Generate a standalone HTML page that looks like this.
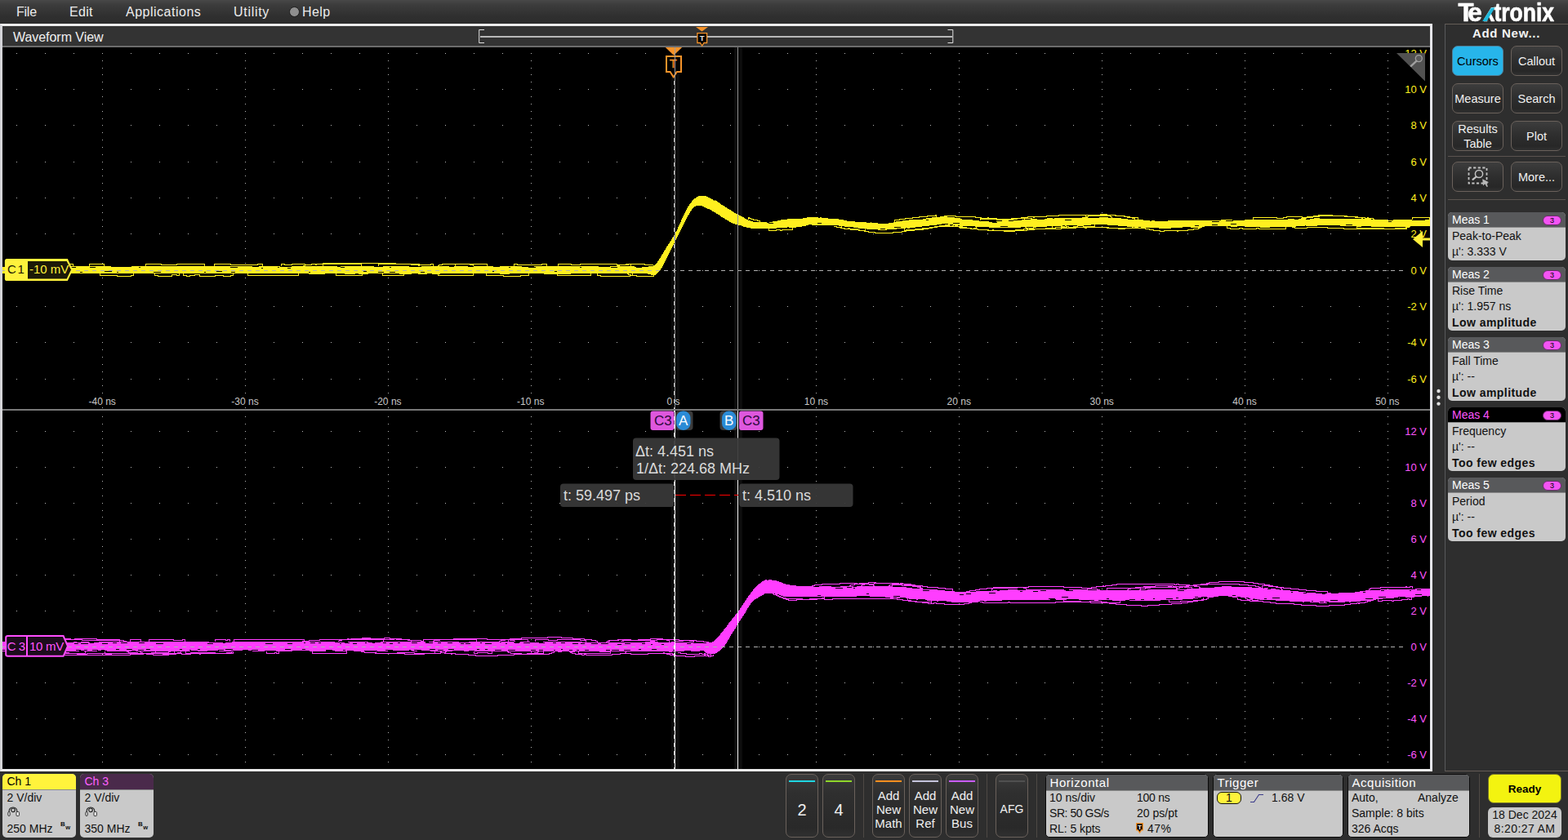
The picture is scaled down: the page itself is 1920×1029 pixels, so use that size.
<!DOCTYPE html>
<html lang="en">
<head>
<meta charset="utf-8">
<title>Waveform View</title>
<style>
*{box-sizing:border-box;margin:0;padding:0}
html,body{width:1920px;height:1029px;overflow:hidden;background:#2e2e2e}
body{position:relative;font-family:"Liberation Sans","DejaVu Sans",sans-serif;color:#e6e6e6;font-size:15px;line-height:1}
.abs{position:absolute}
.t{position:absolute;white-space:nowrap;line-height:1}
#menubar{position:absolute;left:0;top:0;width:1920px;height:29px;background:linear-gradient(#484848 0,#3c3c3c 6px,#2f2f2f 20px,#2c2c2c 100%)}
#menubar .t{top:7px;font-size:16px;color:#ececec}
#wvframe{position:absolute;left:0;top:29px;width:1754px;height:916px;background:#000;border:3px solid #ececec;border-left-color:#d4d4d8;border-right-color:#e6e6ea}
#wvhead{position:absolute;left:3px;top:32px;width:1748px;height:24px;background:#333333}
#wvline{position:absolute;left:3px;top:56px;width:1748px;height:2px;background:#6c6c6c}
#plot{position:absolute;left:0;top:0;width:1920px;height:1029px;pointer-events:none}
.vl{position:absolute;white-space:nowrap;font-size:13px;line-height:14px;height:14px;width:60px;left:1687px;text-align:right}
.vy{color:#ffef1f}.vm{color:#ff55ff}
.tl{position:absolute;white-space:nowrap;font-size:12px;line-height:14px;height:14px;width:80px;text-align:center;color:#c8c8c8;top:485px}
#rpanel{position:absolute;left:1769px;top:29px;width:160px;height:916px;border:1px solid #655d57;border-left-color:#58595b;background:#2e2e2e}
.btn{position:absolute;width:63px;height:37px;border:1px solid #6a615b;border-radius:7px;background:linear-gradient(#3d3d3d 0,#2f2f2f 45%,#272727 85%,#303030 100%);color:#f0f0f0;font-size:14.5px;text-align:center;line-height:36px;white-space:nowrap}
.btn.two{line-height:18px;padding-top:0px}
.btn.sel{background:#27b5ea;border-color:#4f7f98;color:#000}
.sep{position:absolute;left:1773px;width:144px;height:1px;background:#5b544f}
.meas{position:absolute;left:1773px;width:144px;border-radius:5px;background:#c9c9c9;overflow:hidden;color:#111;font-size:14px}
.meas .h{position:absolute;left:0;top:0;width:144px;height:19px;background:#58595b;color:#fff;border-bottom:1px solid #8a8a8a}
.meas .h.sel{background:#000;color:#ff55ff}
.meas .t{left:5px}
.meas b{font-weight:bold}
.pill{position:absolute;left:116px;top:4px;width:23px;height:12px;border-radius:6px;background:#f454f4;border:1px solid #6a2a6a;color:#000;font-size:9px;line-height:11px;text-align:center}
.badge{position:absolute;top:948px;height:78px;border-radius:5px;background:#c9c9c9;overflow:hidden;color:#111;font-size:14px}
.badge .h{position:absolute;left:0;top:0;right:0;height:20px;border-bottom:1px solid #8a8a8a}
.sbadge{position:absolute;top:948px;height:78px;border-radius:5px;background:#c9c9c9;overflow:hidden;color:#111;font-size:14px;border:1px solid #0a0a0a}
.sbadge .h{position:absolute;left:0;top:0;right:0;height:20px;background:#58595b;color:#fff;border-bottom:1px solid #8a8a8a}
.bbtn{position:absolute;top:948px;width:40px;height:78px;border:1px solid #6a615b;border-radius:7px;background:linear-gradient(#3b3b3b 0,#2f2f2f 30%,#292929 85%,#303030 100%);color:#f0f0f0;font-size:15px;text-align:center;white-space:nowrap}
.bbtn i{position:absolute;left:3px;right:3px;top:7px;height:2px;display:block}
.bbtn .t{left:0;width:38px;text-align:center}
.vsep{position:absolute;top:948px;width:1px;height:78px;background:#4e4945}
</style>
</head>
<body>
<div id="menubar">
<span class="t" style="left:20px;letter-spacing:-0.25px">File</span>
<span class="t" style="left:85px;letter-spacing:0.3px">Edit</span>
<span class="t" style="left:154px;letter-spacing:0.5px">Applications</span>
<span class="t" style="left:286px;letter-spacing:0.7px">Utility</span>
<span class="abs" style="left:353.500px;top:8px;width:13px;height:13px;border-radius:50%;background:#8f8f8f;border:1px solid #1c1c1c"></span>
<span class="t" style="left:370px;letter-spacing:0.4px">Help</span>
</div>
<svg class="abs" style="left:1780px;top:0" width="130" height="30" viewBox="0 0 130 30">
<mask id="km" maskUnits="userSpaceOnUse" x="0" y="0" width="130" height="30"><rect x="0" y="0" width="130" height="30" fill="#fff"/><polygon points="34.600,0 49.200,0 49.200,9 46,9 34.600,27.500" fill="#000"/></mask>
<text y="26" mask="url(#km)" font-family="Liberation Sans, sans-serif" font-weight="bold" font-size="32" fill="#fff" stroke="#fff" stroke-width="0.700" stroke-linejoin="round"><tspan x="5.400" textLength="19" lengthAdjust="spacingAndGlyphs">T</tspan><tspan x="17.300" textLength="17.500" lengthAdjust="spacingAndGlyphs">e</tspan><tspan x="35.500" textLength="14.500" lengthAdjust="spacingAndGlyphs">k</tspan><tspan x="49.500" textLength="73.500" lengthAdjust="spacingAndGlyphs">tronix</tspan></text>
<polygon points="35.200,26.100 40.600,26.100 50.400,9.500 46,9.500" fill="#1fb9dc"/>
</svg>
<div id="wvframe"></div>
<div id="wvhead"></div>
<div id="wvline"></div>
<span class="t" style="left:16px;top:38px;font-size:16px;color:#f0f0f0;letter-spacing:-0.050px">Waveform View</span>
<svg id="plot" width="1920" height="1029" viewBox="0 0 1920 1029" shape-rendering="crispEdges">
<path d="M20,65.5h1M55,65.5h1M90,65.5h1M125,65.5h1M160,65.5h1M195,65.5h1M230,65.5h1M265,65.5h1M300,65.5h1M335,65.5h1M370,65.5h1M405,65.5h1M440,65.5h1M475,65.5h1M510,65.5h1M545,65.5h1M580,65.5h1M615,65.5h1M650,65.5h1M685,65.5h1M720,65.5h1M755,65.5h1M790,65.5h1M825,65.5h1M860,65.5h1M894,65.5h1M929,65.5h1M964,65.5h1M999,65.5h1M1034,65.5h1M1069,65.5h1M1104,65.5h1M1139,65.5h1M1174,65.5h1M1209,65.5h1M1244,65.5h1M1279,65.5h1M1314,65.5h1M1349,65.5h1M1384,65.5h1M1419,65.5h1M1454,65.5h1M1489,65.5h1M1524,65.5h1M1559,65.5h1M1594,65.5h1M1629,65.5h1M1664,65.5h1M1699,65.5h1M20,109.5h1M55,109.5h1M90,109.5h1M125,109.5h1M160,109.5h1M195,109.5h1M230,109.5h1M265,109.5h1M300,109.5h1M335,109.5h1M370,109.5h1M405,109.5h1M440,109.5h1M475,109.5h1M510,109.5h1M545,109.5h1M580,109.5h1M615,109.5h1M650,109.5h1M685,109.5h1M720,109.5h1M755,109.5h1M790,109.5h1M825,109.5h1M860,109.5h1M894,109.5h1M929,109.5h1M964,109.5h1M999,109.5h1M1034,109.5h1M1069,109.5h1M1104,109.5h1M1139,109.5h1M1174,109.5h1M1209,109.5h1M1244,109.5h1M1279,109.5h1M1314,109.5h1M1349,109.5h1M1384,109.5h1M1419,109.5h1M1454,109.5h1M1489,109.5h1M1524,109.5h1M1559,109.5h1M1594,109.5h1M1629,109.5h1M1664,109.5h1M1699,109.5h1M20,153.5h1M55,153.5h1M90,153.5h1M125,153.5h1M160,153.5h1M195,153.5h1M230,153.5h1M265,153.5h1M300,153.5h1M335,153.5h1M370,153.5h1M405,153.5h1M440,153.5h1M475,153.5h1M510,153.5h1M545,153.5h1M580,153.5h1M615,153.5h1M650,153.5h1M685,153.5h1M720,153.5h1M755,153.5h1M790,153.5h1M825,153.5h1M860,153.5h1M894,153.5h1M929,153.5h1M964,153.5h1M999,153.5h1M1034,153.5h1M1069,153.5h1M1104,153.5h1M1139,153.5h1M1174,153.5h1M1209,153.5h1M1244,153.5h1M1279,153.5h1M1314,153.5h1M1349,153.5h1M1384,153.5h1M1419,153.5h1M1454,153.5h1M1489,153.5h1M1524,153.5h1M1559,153.5h1M1594,153.5h1M1629,153.5h1M1664,153.5h1M1699,153.5h1M20,198.5h1M55,198.5h1M90,198.5h1M125,198.5h1M160,198.5h1M195,198.5h1M230,198.5h1M265,198.5h1M300,198.5h1M335,198.5h1M370,198.5h1M405,198.5h1M440,198.5h1M475,198.5h1M510,198.5h1M545,198.5h1M580,198.5h1M615,198.5h1M650,198.5h1M685,198.5h1M720,198.5h1M755,198.5h1M790,198.5h1M825,198.5h1M860,198.5h1M894,198.5h1M929,198.5h1M964,198.5h1M999,198.5h1M1034,198.5h1M1069,198.5h1M1104,198.5h1M1139,198.5h1M1174,198.5h1M1209,198.5h1M1244,198.5h1M1279,198.5h1M1314,198.5h1M1349,198.5h1M1384,198.5h1M1419,198.5h1M1454,198.5h1M1489,198.5h1M1524,198.5h1M1559,198.5h1M1594,198.5h1M1629,198.5h1M1664,198.5h1M1699,198.5h1M20,242.5h1M55,242.5h1M90,242.5h1M125,242.5h1M160,242.5h1M195,242.5h1M230,242.5h1M265,242.5h1M300,242.5h1M335,242.5h1M370,242.5h1M405,242.5h1M440,242.5h1M475,242.5h1M510,242.5h1M545,242.5h1M580,242.5h1M615,242.5h1M650,242.5h1M685,242.5h1M720,242.5h1M755,242.5h1M790,242.5h1M825,242.5h1M860,242.5h1M894,242.5h1M929,242.5h1M964,242.5h1M999,242.5h1M1034,242.5h1M1069,242.5h1M1104,242.5h1M1139,242.5h1M1174,242.5h1M1209,242.5h1M1244,242.5h1M1279,242.5h1M1314,242.5h1M1349,242.5h1M1384,242.5h1M1419,242.5h1M1454,242.5h1M1489,242.5h1M1524,242.5h1M1559,242.5h1M1594,242.5h1M1629,242.5h1M1664,242.5h1M1699,242.5h1M20,286.5h1M55,286.5h1M90,286.5h1M125,286.5h1M160,286.5h1M195,286.5h1M230,286.5h1M265,286.5h1M300,286.5h1M335,286.5h1M370,286.5h1M405,286.5h1M440,286.5h1M475,286.5h1M510,286.5h1M545,286.5h1M580,286.5h1M615,286.5h1M650,286.5h1M685,286.5h1M720,286.5h1M755,286.5h1M790,286.5h1M825,286.5h1M860,286.5h1M894,286.5h1M929,286.5h1M964,286.5h1M999,286.5h1M1034,286.5h1M1069,286.5h1M1104,286.5h1M1139,286.5h1M1174,286.5h1M1209,286.5h1M1244,286.5h1M1279,286.5h1M1314,286.5h1M1349,286.5h1M1384,286.5h1M1419,286.5h1M1454,286.5h1M1489,286.5h1M1524,286.5h1M1559,286.5h1M1594,286.5h1M1629,286.5h1M1664,286.5h1M1699,286.5h1M20,331.5h1M55,331.5h1M90,331.5h1M125,331.5h1M160,331.5h1M195,331.5h1M230,331.5h1M265,331.5h1M300,331.5h1M335,331.5h1M370,331.5h1M405,331.5h1M440,331.5h1M475,331.5h1M510,331.5h1M545,331.5h1M580,331.5h1M615,331.5h1M650,331.5h1M685,331.5h1M720,331.5h1M755,331.5h1M790,331.5h1M825,331.5h1M860,331.5h1M894,331.5h1M929,331.5h1M964,331.5h1M999,331.5h1M1034,331.5h1M1069,331.5h1M1104,331.5h1M1139,331.5h1M1174,331.5h1M1209,331.5h1M1244,331.5h1M1279,331.5h1M1314,331.5h1M1349,331.5h1M1384,331.5h1M1419,331.5h1M1454,331.5h1M1489,331.5h1M1524,331.5h1M1559,331.5h1M1594,331.5h1M1629,331.5h1M1664,331.5h1M1699,331.5h1M20,375.5h1M55,375.5h1M90,375.5h1M125,375.5h1M160,375.5h1M195,375.5h1M230,375.5h1M265,375.5h1M300,375.5h1M335,375.5h1M370,375.5h1M405,375.5h1M440,375.5h1M475,375.5h1M510,375.5h1M545,375.5h1M580,375.5h1M615,375.5h1M650,375.5h1M685,375.5h1M720,375.5h1M755,375.5h1M790,375.5h1M825,375.5h1M860,375.5h1M894,375.5h1M929,375.5h1M964,375.5h1M999,375.5h1M1034,375.5h1M1069,375.5h1M1104,375.5h1M1139,375.5h1M1174,375.5h1M1209,375.5h1M1244,375.5h1M1279,375.5h1M1314,375.5h1M1349,375.5h1M1384,375.5h1M1419,375.5h1M1454,375.5h1M1489,375.5h1M1524,375.5h1M1559,375.5h1M1594,375.5h1M1629,375.5h1M1664,375.5h1M1699,375.5h1M20,419.5h1M55,419.5h1M90,419.5h1M125,419.5h1M160,419.5h1M195,419.5h1M230,419.5h1M265,419.5h1M300,419.5h1M335,419.5h1M370,419.5h1M405,419.5h1M440,419.5h1M475,419.5h1M510,419.5h1M545,419.5h1M580,419.5h1M615,419.5h1M650,419.5h1M685,419.5h1M720,419.5h1M755,419.5h1M790,419.5h1M825,419.5h1M860,419.5h1M894,419.5h1M929,419.5h1M964,419.5h1M999,419.5h1M1034,419.5h1M1069,419.5h1M1104,419.5h1M1139,419.5h1M1174,419.5h1M1209,419.5h1M1244,419.5h1M1279,419.5h1M1314,419.5h1M1349,419.5h1M1384,419.5h1M1419,419.5h1M1454,419.5h1M1489,419.5h1M1524,419.5h1M1559,419.5h1M1594,419.5h1M1629,419.5h1M1664,419.5h1M1699,419.5h1M20,464.5h1M55,464.5h1M90,464.5h1M125,464.5h1M160,464.5h1M195,464.5h1M230,464.5h1M265,464.5h1M300,464.5h1M335,464.5h1M370,464.5h1M405,464.5h1M440,464.5h1M475,464.5h1M510,464.5h1M545,464.5h1M580,464.5h1M615,464.5h1M650,464.5h1M685,464.5h1M720,464.5h1M755,464.5h1M790,464.5h1M825,464.5h1M860,464.5h1M894,464.5h1M929,464.5h1M964,464.5h1M999,464.5h1M1034,464.5h1M1069,464.5h1M1104,464.5h1M1139,464.5h1M1174,464.5h1M1209,464.5h1M1244,464.5h1M1279,464.5h1M1314,464.5h1M1349,464.5h1M1384,464.5h1M1419,464.5h1M1454,464.5h1M1489,464.5h1M1524,464.5h1M1559,464.5h1M1594,464.5h1M1629,464.5h1M1664,464.5h1M1699,464.5h1M20,528.5h1M55,528.5h1M90,528.5h1M125,528.5h1M160,528.5h1M195,528.5h1M230,528.5h1M265,528.5h1M300,528.5h1M335,528.5h1M370,528.5h1M405,528.5h1M440,528.5h1M475,528.5h1M510,528.5h1M545,528.5h1M580,528.5h1M615,528.5h1M650,528.5h1M685,528.5h1M720,528.5h1M755,528.5h1M790,528.5h1M825,528.5h1M860,528.5h1M894,528.5h1M929,528.5h1M964,528.5h1M999,528.5h1M1034,528.5h1M1069,528.5h1M1104,528.5h1M1139,528.5h1M1174,528.5h1M1209,528.5h1M1244,528.5h1M1279,528.5h1M1314,528.5h1M1349,528.5h1M1384,528.5h1M1419,528.5h1M1454,528.5h1M1489,528.5h1M1524,528.5h1M1559,528.5h1M1594,528.5h1M1629,528.5h1M1664,528.5h1M1699,528.5h1M20,572.5h1M55,572.5h1M90,572.5h1M125,572.5h1M160,572.5h1M195,572.5h1M230,572.5h1M265,572.5h1M300,572.5h1M335,572.5h1M370,572.5h1M405,572.5h1M440,572.5h1M475,572.5h1M510,572.5h1M545,572.5h1M580,572.5h1M615,572.5h1M650,572.5h1M685,572.5h1M720,572.5h1M755,572.5h1M790,572.5h1M825,572.5h1M860,572.5h1M894,572.5h1M929,572.5h1M964,572.5h1M999,572.5h1M1034,572.5h1M1069,572.5h1M1104,572.5h1M1139,572.5h1M1174,572.5h1M1209,572.5h1M1244,572.5h1M1279,572.5h1M1314,572.5h1M1349,572.5h1M1384,572.5h1M1419,572.5h1M1454,572.5h1M1489,572.5h1M1524,572.5h1M1559,572.5h1M1594,572.5h1M1629,572.5h1M1664,572.5h1M1699,572.5h1M20,616.5h1M55,616.5h1M90,616.5h1M125,616.5h1M160,616.5h1M195,616.5h1M230,616.5h1M265,616.5h1M300,616.5h1M335,616.5h1M370,616.5h1M405,616.5h1M440,616.5h1M475,616.5h1M510,616.5h1M545,616.5h1M580,616.5h1M615,616.5h1M650,616.5h1M685,616.5h1M720,616.5h1M755,616.5h1M790,616.5h1M825,616.5h1M860,616.5h1M894,616.5h1M929,616.5h1M964,616.5h1M999,616.5h1M1034,616.5h1M1069,616.5h1M1104,616.5h1M1139,616.5h1M1174,616.5h1M1209,616.5h1M1244,616.5h1M1279,616.5h1M1314,616.5h1M1349,616.5h1M1384,616.5h1M1419,616.5h1M1454,616.5h1M1489,616.5h1M1524,616.5h1M1559,616.5h1M1594,616.5h1M1629,616.5h1M1664,616.5h1M1699,616.5h1M20,660.5h1M55,660.5h1M90,660.5h1M125,660.5h1M160,660.5h1M195,660.5h1M230,660.5h1M265,660.5h1M300,660.5h1M335,660.5h1M370,660.5h1M405,660.5h1M440,660.5h1M475,660.5h1M510,660.5h1M545,660.5h1M580,660.5h1M615,660.5h1M650,660.5h1M685,660.5h1M720,660.5h1M755,660.5h1M790,660.5h1M825,660.5h1M860,660.5h1M894,660.5h1M929,660.5h1M964,660.5h1M999,660.5h1M1034,660.5h1M1069,660.5h1M1104,660.5h1M1139,660.5h1M1174,660.5h1M1209,660.5h1M1244,660.5h1M1279,660.5h1M1314,660.5h1M1349,660.5h1M1384,660.5h1M1419,660.5h1M1454,660.5h1M1489,660.5h1M1524,660.5h1M1559,660.5h1M1594,660.5h1M1629,660.5h1M1664,660.5h1M1699,660.5h1M20,704.5h1M55,704.5h1M90,704.5h1M125,704.5h1M160,704.5h1M195,704.5h1M230,704.5h1M265,704.5h1M300,704.5h1M335,704.5h1M370,704.5h1M405,704.5h1M440,704.5h1M475,704.5h1M510,704.5h1M545,704.5h1M580,704.5h1M615,704.5h1M650,704.5h1M685,704.5h1M720,704.5h1M755,704.5h1M790,704.5h1M825,704.5h1M860,704.5h1M894,704.5h1M929,704.5h1M964,704.5h1M999,704.5h1M1034,704.5h1M1069,704.5h1M1104,704.5h1M1139,704.5h1M1174,704.5h1M1209,704.5h1M1244,704.5h1M1279,704.5h1M1314,704.5h1M1349,704.5h1M1384,704.5h1M1419,704.5h1M1454,704.5h1M1489,704.5h1M1524,704.5h1M1559,704.5h1M1594,704.5h1M1629,704.5h1M1664,704.5h1M1699,704.5h1M20,748.5h1M55,748.5h1M90,748.5h1M125,748.5h1M160,748.5h1M195,748.5h1M230,748.5h1M265,748.5h1M300,748.5h1M335,748.5h1M370,748.5h1M405,748.5h1M440,748.5h1M475,748.5h1M510,748.5h1M545,748.5h1M580,748.5h1M615,748.5h1M650,748.5h1M685,748.5h1M720,748.5h1M755,748.5h1M790,748.5h1M825,748.5h1M860,748.5h1M894,748.5h1M929,748.5h1M964,748.5h1M999,748.5h1M1034,748.5h1M1069,748.5h1M1104,748.5h1M1139,748.5h1M1174,748.5h1M1209,748.5h1M1244,748.5h1M1279,748.5h1M1314,748.5h1M1349,748.5h1M1384,748.5h1M1419,748.5h1M1454,748.5h1M1489,748.5h1M1524,748.5h1M1559,748.5h1M1594,748.5h1M1629,748.5h1M1664,748.5h1M1699,748.5h1M20,792.5h1M55,792.5h1M90,792.5h1M125,792.5h1M160,792.5h1M195,792.5h1M230,792.5h1M265,792.5h1M300,792.5h1M335,792.5h1M370,792.5h1M405,792.5h1M440,792.5h1M475,792.5h1M510,792.5h1M545,792.5h1M580,792.5h1M615,792.5h1M650,792.5h1M685,792.5h1M720,792.5h1M755,792.5h1M790,792.5h1M825,792.5h1M860,792.5h1M894,792.5h1M929,792.5h1M964,792.5h1M999,792.5h1M1034,792.5h1M1069,792.5h1M1104,792.5h1M1139,792.5h1M1174,792.5h1M1209,792.5h1M1244,792.5h1M1279,792.5h1M1314,792.5h1M1349,792.5h1M1384,792.5h1M1419,792.5h1M1454,792.5h1M1489,792.5h1M1524,792.5h1M1559,792.5h1M1594,792.5h1M1629,792.5h1M1664,792.5h1M1699,792.5h1M20,836.5h1M55,836.5h1M90,836.5h1M125,836.5h1M160,836.5h1M195,836.5h1M230,836.5h1M265,836.5h1M300,836.5h1M335,836.5h1M370,836.5h1M405,836.5h1M440,836.5h1M475,836.5h1M510,836.5h1M545,836.5h1M580,836.5h1M615,836.5h1M650,836.5h1M685,836.5h1M720,836.5h1M755,836.5h1M790,836.5h1M825,836.5h1M860,836.5h1M894,836.5h1M929,836.5h1M964,836.5h1M999,836.5h1M1034,836.5h1M1069,836.5h1M1104,836.5h1M1139,836.5h1M1174,836.5h1M1209,836.5h1M1244,836.5h1M1279,836.5h1M1314,836.5h1M1349,836.5h1M1384,836.5h1M1419,836.5h1M1454,836.5h1M1489,836.5h1M1524,836.5h1M1559,836.5h1M1594,836.5h1M1629,836.5h1M1664,836.5h1M1699,836.5h1M20,880.5h1M55,880.5h1M90,880.5h1M125,880.5h1M160,880.5h1M195,880.5h1M230,880.5h1M265,880.5h1M300,880.5h1M335,880.5h1M370,880.5h1M405,880.5h1M440,880.5h1M475,880.5h1M510,880.5h1M545,880.5h1M580,880.5h1M615,880.5h1M650,880.5h1M685,880.5h1M720,880.5h1M755,880.5h1M790,880.5h1M825,880.5h1M860,880.5h1M894,880.5h1M929,880.5h1M964,880.5h1M999,880.5h1M1034,880.5h1M1069,880.5h1M1104,880.5h1M1139,880.5h1M1174,880.5h1M1209,880.5h1M1244,880.5h1M1279,880.5h1M1314,880.5h1M1349,880.5h1M1384,880.5h1M1419,880.5h1M1454,880.5h1M1489,880.5h1M1524,880.5h1M1559,880.5h1M1594,880.5h1M1629,880.5h1M1664,880.5h1M1699,880.5h1M20,924.5h1M55,924.5h1M90,924.5h1M125,924.5h1M160,924.5h1M195,924.5h1M230,924.5h1M265,924.5h1M300,924.5h1M335,924.5h1M370,924.5h1M405,924.5h1M440,924.5h1M475,924.5h1M510,924.5h1M545,924.5h1M580,924.5h1M615,924.5h1M650,924.5h1M685,924.5h1M720,924.5h1M755,924.5h1M790,924.5h1M825,924.5h1M860,924.5h1M894,924.5h1M929,924.5h1M964,924.5h1M999,924.5h1M1034,924.5h1M1069,924.5h1M1104,924.5h1M1139,924.5h1M1174,924.5h1M1209,924.5h1M1244,924.5h1M1279,924.5h1M1314,924.5h1M1349,924.5h1M1384,924.5h1M1419,924.5h1M1454,924.5h1M1489,924.5h1M1524,924.5h1M1559,924.5h1M1594,924.5h1M1629,924.5h1M1664,924.5h1M1699,924.5h1M125,74.5h1M125,83.5h1M125,91.5h1M125,100.5h1M125,118.5h1M125,127.5h1M125,136.5h1M125,145.5h1M125,162.5h1M125,171.5h1M125,180.5h1M125,189.5h1M125,207.5h1M125,215.5h1M125,224.5h1M125,233.5h1M125,251.5h1M125,260.5h1M125,269.5h1M125,277.5h1M125,295.5h1M125,304.5h1M125,313.5h1M125,322.5h1M125,340.5h1M125,348.5h1M125,357.5h1M125,366.5h1M125,384.5h1M125,393.5h1M125,402.5h1M125,410.5h1M125,428.5h1M125,437.5h1M125,446.5h1M125,455.5h1M125,472.5h1M125,481.5h1M125,499.5h1M125,510.5h1M125,519.5h1M125,537.5h1M125,545.5h1M125,554.5h1M125,563.5h1M125,581.5h1M125,589.5h1M125,598.5h1M125,607.5h1M125,625.5h1M125,633.5h1M125,642.5h1M125,651.5h1M125,669.5h1M125,677.5h1M125,686.5h1M125,695.5h1M125,713.5h1M125,721.5h1M125,730.5h1M125,739.5h1M125,757.5h1M125,765.5h1M125,774.5h1M125,783.5h1M125,801.5h1M125,809.5h1M125,818.5h1M125,827.5h1M125,845.5h1M125,853.5h1M125,862.5h1M125,871.5h1M125,889.5h1M125,897.5h1M125,906.5h1M125,915.5h1M125,933.5h1M300,74.5h1M300,83.5h1M300,91.5h1M300,100.5h1M300,118.5h1M300,127.5h1M300,136.5h1M300,145.5h1M300,162.5h1M300,171.5h1M300,180.5h1M300,189.5h1M300,207.5h1M300,215.5h1M300,224.5h1M300,233.5h1M300,251.5h1M300,260.5h1M300,269.5h1M300,277.5h1M300,295.5h1M300,304.5h1M300,313.5h1M300,322.5h1M300,340.5h1M300,348.5h1M300,357.5h1M300,366.5h1M300,384.5h1M300,393.5h1M300,402.5h1M300,410.5h1M300,428.5h1M300,437.5h1M300,446.5h1M300,455.5h1M300,472.5h1M300,481.5h1M300,499.5h1M300,510.5h1M300,519.5h1M300,537.5h1M300,545.5h1M300,554.5h1M300,563.5h1M300,581.5h1M300,589.5h1M300,598.5h1M300,607.5h1M300,625.5h1M300,633.5h1M300,642.5h1M300,651.5h1M300,669.5h1M300,677.5h1M300,686.5h1M300,695.5h1M300,713.5h1M300,721.5h1M300,730.5h1M300,739.5h1M300,757.5h1M300,765.5h1M300,774.5h1M300,783.5h1M300,801.5h1M300,809.5h1M300,818.5h1M300,827.5h1M300,845.5h1M300,853.5h1M300,862.5h1M300,871.5h1M300,889.5h1M300,897.5h1M300,906.5h1M300,915.5h1M300,933.5h1M475,74.5h1M475,83.5h1M475,91.5h1M475,100.5h1M475,118.5h1M475,127.5h1M475,136.5h1M475,145.5h1M475,162.5h1M475,171.5h1M475,180.5h1M475,189.5h1M475,207.5h1M475,215.5h1M475,224.5h1M475,233.5h1M475,251.5h1M475,260.5h1M475,269.5h1M475,277.5h1M475,295.5h1M475,304.5h1M475,313.5h1M475,322.5h1M475,340.5h1M475,348.5h1M475,357.5h1M475,366.5h1M475,384.5h1M475,393.5h1M475,402.5h1M475,410.5h1M475,428.5h1M475,437.5h1M475,446.5h1M475,455.5h1M475,472.5h1M475,481.5h1M475,499.5h1M475,510.5h1M475,519.5h1M475,537.5h1M475,545.5h1M475,554.5h1M475,563.5h1M475,581.5h1M475,589.5h1M475,598.5h1M475,607.5h1M475,625.5h1M475,633.5h1M475,642.5h1M475,651.5h1M475,669.5h1M475,677.5h1M475,686.5h1M475,695.5h1M475,713.5h1M475,721.5h1M475,730.5h1M475,739.5h1M475,757.5h1M475,765.5h1M475,774.5h1M475,783.5h1M475,801.5h1M475,809.5h1M475,818.5h1M475,827.5h1M475,845.5h1M475,853.5h1M475,862.5h1M475,871.5h1M475,889.5h1M475,897.5h1M475,906.5h1M475,915.5h1M475,933.5h1M650,74.5h1M650,83.5h1M650,91.5h1M650,100.5h1M650,118.5h1M650,127.5h1M650,136.5h1M650,145.5h1M650,162.5h1M650,171.5h1M650,180.5h1M650,189.5h1M650,207.5h1M650,215.5h1M650,224.5h1M650,233.5h1M650,251.5h1M650,260.5h1M650,269.5h1M650,277.5h1M650,295.5h1M650,304.5h1M650,313.5h1M650,322.5h1M650,340.5h1M650,348.5h1M650,357.5h1M650,366.5h1M650,384.5h1M650,393.5h1M650,402.5h1M650,410.5h1M650,428.5h1M650,437.5h1M650,446.5h1M650,455.5h1M650,472.5h1M650,481.5h1M650,499.5h1M650,510.5h1M650,519.5h1M650,537.5h1M650,545.5h1M650,554.5h1M650,563.5h1M650,581.5h1M650,589.5h1M650,598.5h1M650,607.5h1M650,625.5h1M650,633.5h1M650,642.5h1M650,651.5h1M650,669.5h1M650,677.5h1M650,686.5h1M650,695.5h1M650,713.5h1M650,721.5h1M650,730.5h1M650,739.5h1M650,757.5h1M650,765.5h1M650,774.5h1M650,783.5h1M650,801.5h1M650,809.5h1M650,818.5h1M650,827.5h1M650,845.5h1M650,853.5h1M650,862.5h1M650,871.5h1M650,889.5h1M650,897.5h1M650,906.5h1M650,915.5h1M650,933.5h1M825,74.5h1M825,83.5h1M825,91.5h1M825,100.5h1M825,118.5h1M825,127.5h1M825,136.5h1M825,145.5h1M825,162.5h1M825,171.5h1M825,180.5h1M825,189.5h1M825,207.5h1M825,215.5h1M825,224.5h1M825,233.5h1M825,251.5h1M825,260.5h1M825,269.5h1M825,277.5h1M825,295.5h1M825,304.5h1M825,313.5h1M825,322.5h1M825,340.5h1M825,348.5h1M825,357.5h1M825,366.5h1M825,384.5h1M825,393.5h1M825,402.5h1M825,410.5h1M825,428.5h1M825,437.5h1M825,446.5h1M825,455.5h1M825,472.5h1M825,481.5h1M825,499.5h1M825,510.5h1M825,519.5h1M825,537.5h1M825,545.5h1M825,554.5h1M825,563.5h1M825,581.5h1M825,589.5h1M825,598.5h1M825,607.5h1M825,625.5h1M825,633.5h1M825,642.5h1M825,651.5h1M825,669.5h1M825,677.5h1M825,686.5h1M825,695.5h1M825,713.5h1M825,721.5h1M825,730.5h1M825,739.5h1M825,757.5h1M825,765.5h1M825,774.5h1M825,783.5h1M825,801.5h1M825,809.5h1M825,818.5h1M825,827.5h1M825,845.5h1M825,853.5h1M825,862.5h1M825,871.5h1M825,889.5h1M825,897.5h1M825,906.5h1M825,915.5h1M825,933.5h1M999,74.5h1M999,83.5h1M999,91.5h1M999,100.5h1M999,118.5h1M999,127.5h1M999,136.5h1M999,145.5h1M999,162.5h1M999,171.5h1M999,180.5h1M999,189.5h1M999,207.5h1M999,215.5h1M999,224.5h1M999,233.5h1M999,251.5h1M999,260.5h1M999,269.5h1M999,277.5h1M999,295.5h1M999,304.5h1M999,313.5h1M999,322.5h1M999,340.5h1M999,348.5h1M999,357.5h1M999,366.5h1M999,384.5h1M999,393.5h1M999,402.5h1M999,410.5h1M999,428.5h1M999,437.5h1M999,446.5h1M999,455.5h1M999,472.5h1M999,481.5h1M999,499.5h1M999,510.5h1M999,519.5h1M999,537.5h1M999,545.5h1M999,554.5h1M999,563.5h1M999,581.5h1M999,589.5h1M999,598.5h1M999,607.5h1M999,625.5h1M999,633.5h1M999,642.5h1M999,651.5h1M999,669.5h1M999,677.5h1M999,686.5h1M999,695.5h1M999,713.5h1M999,721.5h1M999,730.5h1M999,739.5h1M999,757.5h1M999,765.5h1M999,774.5h1M999,783.5h1M999,801.5h1M999,809.5h1M999,818.5h1M999,827.5h1M999,845.5h1M999,853.5h1M999,862.5h1M999,871.5h1M999,889.5h1M999,897.5h1M999,906.5h1M999,915.5h1M999,933.5h1M1174,74.5h1M1174,83.5h1M1174,91.5h1M1174,100.5h1M1174,118.5h1M1174,127.5h1M1174,136.5h1M1174,145.5h1M1174,162.5h1M1174,171.5h1M1174,180.5h1M1174,189.5h1M1174,207.5h1M1174,215.5h1M1174,224.5h1M1174,233.5h1M1174,251.5h1M1174,260.5h1M1174,269.5h1M1174,277.5h1M1174,295.5h1M1174,304.5h1M1174,313.5h1M1174,322.5h1M1174,340.5h1M1174,348.5h1M1174,357.5h1M1174,366.5h1M1174,384.5h1M1174,393.5h1M1174,402.5h1M1174,410.5h1M1174,428.5h1M1174,437.5h1M1174,446.5h1M1174,455.5h1M1174,472.5h1M1174,481.5h1M1174,499.5h1M1174,510.5h1M1174,519.5h1M1174,537.5h1M1174,545.5h1M1174,554.5h1M1174,563.5h1M1174,581.5h1M1174,589.5h1M1174,598.5h1M1174,607.5h1M1174,625.5h1M1174,633.5h1M1174,642.5h1M1174,651.5h1M1174,669.5h1M1174,677.5h1M1174,686.5h1M1174,695.5h1M1174,713.5h1M1174,721.5h1M1174,730.5h1M1174,739.5h1M1174,757.5h1M1174,765.5h1M1174,774.5h1M1174,783.5h1M1174,801.5h1M1174,809.5h1M1174,818.5h1M1174,827.5h1M1174,845.5h1M1174,853.5h1M1174,862.5h1M1174,871.5h1M1174,889.5h1M1174,897.5h1M1174,906.5h1M1174,915.5h1M1174,933.5h1M1349,74.5h1M1349,83.5h1M1349,91.5h1M1349,100.5h1M1349,118.5h1M1349,127.5h1M1349,136.5h1M1349,145.5h1M1349,162.5h1M1349,171.5h1M1349,180.5h1M1349,189.5h1M1349,207.5h1M1349,215.5h1M1349,224.5h1M1349,233.5h1M1349,251.5h1M1349,260.5h1M1349,269.5h1M1349,277.5h1M1349,295.5h1M1349,304.5h1M1349,313.5h1M1349,322.5h1M1349,340.5h1M1349,348.5h1M1349,357.5h1M1349,366.5h1M1349,384.5h1M1349,393.5h1M1349,402.5h1M1349,410.5h1M1349,428.5h1M1349,437.5h1M1349,446.5h1M1349,455.5h1M1349,472.5h1M1349,481.5h1M1349,499.5h1M1349,510.5h1M1349,519.5h1M1349,537.5h1M1349,545.5h1M1349,554.5h1M1349,563.5h1M1349,581.5h1M1349,589.5h1M1349,598.5h1M1349,607.5h1M1349,625.5h1M1349,633.5h1M1349,642.5h1M1349,651.5h1M1349,669.5h1M1349,677.5h1M1349,686.5h1M1349,695.5h1M1349,713.5h1M1349,721.5h1M1349,730.5h1M1349,739.5h1M1349,757.5h1M1349,765.5h1M1349,774.5h1M1349,783.5h1M1349,801.5h1M1349,809.5h1M1349,818.5h1M1349,827.5h1M1349,845.5h1M1349,853.5h1M1349,862.5h1M1349,871.5h1M1349,889.5h1M1349,897.5h1M1349,906.5h1M1349,915.5h1M1349,933.5h1M1524,74.5h1M1524,83.5h1M1524,91.5h1M1524,100.5h1M1524,118.5h1M1524,127.5h1M1524,136.5h1M1524,145.5h1M1524,162.5h1M1524,171.5h1M1524,180.5h1M1524,189.5h1M1524,207.5h1M1524,215.5h1M1524,224.5h1M1524,233.5h1M1524,251.5h1M1524,260.5h1M1524,269.5h1M1524,277.5h1M1524,295.5h1M1524,304.5h1M1524,313.5h1M1524,322.5h1M1524,340.5h1M1524,348.5h1M1524,357.5h1M1524,366.5h1M1524,384.5h1M1524,393.5h1M1524,402.5h1M1524,410.5h1M1524,428.5h1M1524,437.5h1M1524,446.5h1M1524,455.5h1M1524,472.5h1M1524,481.5h1M1524,499.5h1M1524,510.5h1M1524,519.5h1M1524,537.5h1M1524,545.5h1M1524,554.5h1M1524,563.5h1M1524,581.5h1M1524,589.5h1M1524,598.5h1M1524,607.5h1M1524,625.5h1M1524,633.5h1M1524,642.5h1M1524,651.5h1M1524,669.5h1M1524,677.5h1M1524,686.5h1M1524,695.5h1M1524,713.5h1M1524,721.5h1M1524,730.5h1M1524,739.5h1M1524,757.5h1M1524,765.5h1M1524,774.5h1M1524,783.5h1M1524,801.5h1M1524,809.5h1M1524,818.5h1M1524,827.5h1M1524,845.5h1M1524,853.5h1M1524,862.5h1M1524,871.5h1M1524,889.5h1M1524,897.5h1M1524,906.5h1M1524,915.5h1M1524,933.5h1M1699,74.5h1M1699,83.5h1M1699,91.5h1M1699,100.5h1M1699,118.5h1M1699,127.5h1M1699,136.5h1M1699,145.5h1M1699,162.5h1M1699,171.5h1M1699,180.5h1M1699,189.5h1M1699,207.5h1M1699,215.5h1M1699,224.5h1M1699,233.5h1M1699,251.5h1M1699,260.5h1M1699,269.5h1M1699,277.5h1M1699,295.5h1M1699,304.5h1M1699,313.5h1M1699,322.5h1M1699,340.5h1M1699,348.5h1M1699,357.5h1M1699,366.5h1M1699,384.5h1M1699,393.5h1M1699,402.5h1M1699,410.5h1M1699,428.5h1M1699,437.5h1M1699,446.5h1M1699,455.5h1M1699,472.5h1M1699,481.5h1M1699,499.5h1M1699,510.5h1M1699,519.5h1M1699,537.5h1M1699,545.5h1M1699,554.5h1M1699,563.5h1M1699,581.5h1M1699,589.5h1M1699,598.5h1M1699,607.5h1M1699,625.5h1M1699,633.5h1M1699,642.5h1M1699,651.5h1M1699,669.5h1M1699,677.5h1M1699,686.5h1M1699,695.5h1M1699,713.5h1M1699,721.5h1M1699,730.5h1M1699,739.5h1M1699,757.5h1M1699,765.5h1M1699,774.5h1M1699,783.5h1M1699,801.5h1M1699,809.5h1M1699,818.5h1M1699,827.5h1M1699,845.5h1M1699,853.5h1M1699,862.5h1M1699,871.5h1M1699,889.5h1M1699,897.5h1M1699,906.5h1M1699,915.5h1M1699,933.5h1" stroke="#b6b6b6" stroke-width="1" fill="none"/>
<rect x="822" y="58" width="10" height="884" fill="#0c0c0c"/>
<rect x="899" y="58" width="10" height="884" fill="#0c0c0c"/>
<rect x="824" y="58" width="1" height="884" fill="#000"/><rect x="827" y="58" width="1" height="884" fill="#000"/><rect x="902" y="58" width="1" height="884" fill="#000"/><rect x="904" y="58" width="1" height="884" fill="#000"/>
<path d="M3,327H14V326H25V327H31V326H45V327H50V326H63V327H76V326H136V327H161V326H309V327H317V326H343V327H357V326H413V327H417V326H458V327H469V326H501V327H516V326H550V327H556V326H573V327H580V326H604V327H612V326H639V327H654V326H733V327H747V326H777V327H794V326H800V325H802V324H803V323H804V322H805V320H806V319H807V317H808V316H809V314H810V312H811V311H812V309H813V307H814V306H815V304H816V302H817V301H818V299H819V298H820V296H821V295H822V293H823V291H824V290H825V288H826V286H827V284H828V283H829V281H830V278H831V276H832V274H833V272H834V269H835V267H836V265H837V263H838V261H839V259H840V257H841V255H842V253H843V252H844V250H845V249H846V248H847V246H848V245H849V244H850V243H852V242H853V241H855V240H865V241H867V242H869V243H871V244H873V245H874V246H875V245H876V246H878V247H879V248H881V249H882V250H883V251H885V252H887V253H888V254H890V255H891V256H893V257H895V258H896V259H898V260H899V261H901V262H903V263H905V264H907V265H909V266H911V267H912V268H914V269H916V270H919V271H922V272H939V273H942V272H946V271H952V270H956V269H964V268H983V267H988V266H1002V267H1004V266H1006V267H1014V268H1027V269H1033V270H1037V271H1047V272H1061V273H1066V272H1067V273H1075V274H1088V273H1094V272H1097V271H1105V270H1113V269H1130V268H1134V267H1141V266H1151V265H1160V266H1169V267H1176V268H1178V269H1191V270H1199V271H1211V272H1220V271H1241V270H1251V269H1262V268H1270V269H1279V268H1282V267H1289V268H1291V267H1325V266H1332V267H1346V266H1357V267H1373V268H1381V269H1400V270H1408V271H1410V270H1414V271H1430V270H1495V269H1509V270H1524V269H1577V268H1585V269H1590V268H1599V269H1604V268H1609V267H1616V268H1679V269H1699V270H1706V269H1729V270H1745V269H1751V277H1727V278H1679V277H1667V278H1662V277H1641V276H1613V277H1599V276H1598V277H1587V278H1555V279H1543V278H1525V277H1515V278H1507V277H1475V278H1472V279H1458V278H1448V279H1434V280H1419V279H1397V278H1394V279H1389V278H1380V277H1369V276H1356V275H1336V276H1301V277H1282V278H1250V279H1211V278H1194V277H1175V276H1167V275H1161V274H1153V275H1147V276H1138V277H1129V278H1121V279H1114V280H1111V279H1109V280H1098V281H1086V282H1075V281H1061V280H1051V279H1045V278H1034V277H1027V276H994V275H990V276H987V277H982V278H975V279H966V278H964V279H951V280H919V279H914V278H910V277H908V276H904V275H900V274H897V273H895V272H893V271H892V270H890V269H888V268H887V267H885V266H883V265H882V264H881V263H879V262H877V261H876V260H874V259H872V258H871V257H869V256H866V255H864V254H862V253H860V252H852V253H850V254H849V255H848V256H847V258H846V259H845V261H844V263H843V264H842V266H841V268H840V270H839V272H838V274H837V276H836V278H835V280H834V282H833V284H832V286H831V288H830V290H829V292H828V294H827V296H826V298H825V300H824V302H823V304H822V306H821V308H820V310H819V312H818V314H817V316H816V318H815V320H814V322H813V324H812V326H811V328H810V329H809V331H808V332H807V333H806V334H805V335H804V336H803V337H797V336H793V335H699V336H666V335H624V336H612V335H539V336H529V335H523V336H512V335H504V336H489V335H451V336H439V335H435V336H422V335H398V336H378V335H3Z" fill="#ffef1f"/>
<path d="M12.5,326V323.5H28.5V326M36.5,326V323.5H70V324.5H83V323.5H89.5V326M109.5,326V323.5H127.5V326M178.5,326V323.5H197V324.5H216V323.5H250.5V326M262.5,326V323.5H282V324.5H315V323.5H321.5V326M344.5,326V323.5H348V324.5H357V323.5H373.5V326M395.5,326V323.5H442.5V326M463.5,326V323.5H513V324.5H527V323.5H530.5V326M557.5,326V323.5H596.5V326M629.5,326V323.5H633V324.5H663V323.5H669.5V326M683.5,326V323.5H699V324.5H710V323.5H755V324.5H769V323.5H772.5V326M916.5,269V266.5H917V267.5H919V268.5H922V269.5H927V270.5H930.5V273M1095.5,272V269.5H1101V268.5H1108V267.5H1117V266.5H1125V265.5H1135V264.5H1145V263.5H1146.5V266M1200.5,270V267.5H1201V268.5H1220V269.5H1235V268.5H1245V267.5H1254.5V270M1329.5,266V263.5H1358V264.5H1359V263.5H1366V264.5H1376V265.5H1380V266.5H1393.5V269M1534.5,269V266.5H1563V267.5H1571V266.5H1575V265.5H1594.5V268M1729.5,269V266.5H1750.5V269M20.5,335V337.5H45V336.5H63V337.5H72.5V335M122.5,335V337.5H143V338.5H160V337.5H163.5V335M189.5,335V337.5H193V338.5H210V336.5H216V337.5H219.5V335M224.5,335V337.5H228V338.5H232V337.5H238V336.5H244V338.5H263V337.5H273V338.5H282V337.5H285.5V335M303.5,335V337.5H365.5V335M411.5,335V337.5H443.5V335M468.5,335V337.5H494.5V335M536.5,335V337.5H579.5V335M595.5,335V337.5H616V338.5H637V337.5H647.5V335M682.5,335V337.5H723.5V335M731.5,335V337.5H735V338.5H771V337.5H774.5V335M941.5,280V282.5H950V281.5H955V282.5H957V281.5H970V280.5H970.5V278M1030.5,277V279.5H1034V280.5H1038V279.5H1040V280.5H1050V281.5H1052V282.5H1059.5V280M1107.5,280V282.5H1109V281.5H1120V280.5H1129V279.5H1138V278.5H1147V277.5H1174V278.5H1175V279.5H1188V280.5H1192V279.5H1194V280.5H1195.5V278M1288.5,277V279.5H1292V278.5H1306V279.5H1317V278.5H1334V277.5H1340.5V275M1502.5,277V279.5H1506V280.5H1517V279.5H1521V280.5H1538V279.5H1541V280.5H1574.5V278M1661.5,277V279.5H1694V280.5H1722.5V278M1155,265.5H1156V264.5H1170V265.5H1194V266.5H1201V267.5H1209V266.5H1210V267.5H1220V268.5H1238V267.5H1263V268.5H1265M1582,278.5H1585V279.5H1600V278.5H1625V279.5H1645V280.5H1675V279.5H1676V280.5H1708V279.5H1721V278.5H1726M536,325.5H537V324.5H541V323.5H575V324.5H579V325.5H580M1255,278.5H1256V279.5H1260V280.5H1299V279.5H1310V278.5H1314V277.5H1319V276.5H1321M1593,268.5H1594V267.5H1599V266.5H1607V265.5H1615V264.5H1646V265.5H1659V266.5H1671V267.5H1674V266.5H1675V267.5H1681V268.5H1683M1168,275.5H1169V276.5H1172V277.5H1178V278.5H1181V279.5H1189V280.5H1197V281.5H1209V282.5H1215V281.5H1216V282.5H1243V281.5H1253V280.5H1258V279.5H1265V278.5H1268V277.5H1269M371,325.5H373V324.5H381V323.5H386V324.5H387V323.5H395V322.5H484V323.5H503V324.5H512V325.5H514M1021,277.5H1024V278.5H1029V279.5H1033V280.5H1041V281.5H1051V282.5H1058V283.5H1063V284.5H1071V285.5H1093V284.5H1104V283.5H1109V282.5H1119V281.5H1127V280.5H1128V281.5H1130V280.5H1136V279.5H1141V278.5H1144V277.5H1150V276.5H1157V275.5H1162V276.5H1164M1226,271.5H1227V270.5H1234V269.5H1240V268.5H1243V267.5H1250V266.5H1258V265.5H1265V266.5H1266V265.5H1281V264.5H1296V263.5H1338V264.5H1359V265.5H1361V266.5H1362M1157,275.5H1158V276.5H1163V277.5H1165V276.5H1167V277.5H1175V278.5H1183V279.5H1188V280.5H1197V281.5H1210V282.5H1229V283.5H1242V282.5H1257V281.5H1266V280.5H1280V279.5H1292V278.5H1299V277.5H1304M1593,267.5H1595V266.5H1600V265.5H1608V264.5H1614V263.5H1631V264.5H1649V265.5H1662V266.5H1667V267.5H1669M1304,276.5H1305V277.5H1308V278.5H1328V279.5H1330V278.5H1355V279.5H1369V280.5H1371V279.5H1386V278.5H1388M768,335.5H769V336.5H772V337.5H779V338.5H800V337.5H801M755,325.5H758V324.5H766V323.5H789V324.5H800M1320,276.5H1326V277.5H1334V278.5H1357V279.5H1370V280.5H1377V279.5H1399V278.5H1400M1330,265.5H1332V264.5H1337V263.5H1347V262.5H1355V263.5H1365V264.5H1377V265.5H1383V266.5H1386V267.5H1389V268.5H1390M1400,279.5H1402V280.5H1407V281.5H1412V282.5H1420V283.5H1425V282.5H1441V283.5H1442V282.5H1454V281.5H1461V280.5H1467V279.5H1469V278.5H1470" fill="none" stroke="#ffef1f" stroke-width="1"/>
<path d="M50,327.5h4M74,328.5h5M84,327.5h9M110,327.5h7M170,327.5h2M282,327.5h9M320,328.5h2M340,327.5h2M352,328.5h4M417,327.5h5M477,327.5h2M623,327.5h2M647,327.5h9M710,327.5h2M748,327.5h8M779,327.5h7M941,273.5h6M1134,269.5h3M1215,272.5h6M1304,269.5h8M1484,271.5h9M1501,270.5h9M1700,271.5h4M65,333.5h9M98,333.5h3M128,332.5h9M143,333.5h2M188,333.5h9M250,333.5h2M265,332.5h7M283,333.5h5M378,333.5h2M445,332.5h4M463,333.5h7M477,333.5h7M515,333.5h5M603,332.5h2M679,332.5h3M1001,273.5h5M1078,280.5h6M1095,278.5h8M1167,273.5h8M1225,277.5h9M1463,276.5h5M1484,275.5h7M1507,274.5h7M1648,275.5h8" fill="none" stroke="#000" stroke-width="1"/>
<path d="M3,786H37V787H47V786H65V787H73V786H77V787H90V786H94V787H99V786H109V787H121V786H256V787H284V786H410V787H426V786H451V787H466V786H521V787H525V786H562V787H574V786H612V787H614V786H629V787H637V786H649V787H665V786H713V787H790V786H806V787H849V788H865V787H872V786H874V785H875V784H876V783H877V782H878V781H879V780H880V779H881V778H882V776H883V775H884V774H885V773H886V771H887V770H888V769H889V768H890V766H891V765H892V763H893V762H894V761H895V760H896V758H897V757H898V756H899V755H900V753H901V752H902V751H903V750H904V748H905V747H906V745H907V744H908V742H909V741H910V739H911V738H912V736H913V735H914V733H915V732H916V730H917V729H918V728H919V726H920V725H921V724H922V722H923V721H924V720H925V719H926V718H927V717H928V716H929V715H931V714H932V713H933V712H935V711H937V710H939V711H941V710H945V711H951V712H954V713H957V714H959V715H962V716H967V717H975V718H996V719H1003V718H1018V719H1029V718H1045V719H1049V718H1093V719H1110V720H1117V721H1130V722H1148V723H1157V724H1169V725H1195V724H1216V723H1221V724H1224V723H1234V722H1246V723H1257V722H1303V723H1309V722H1331V723H1343V722H1347V723H1405V722H1453V721H1468V720H1487V719H1496V718H1508V719H1533V720H1547V721H1548V720H1553V721H1562V722H1567V723H1568V722H1571V723H1580V724H1590V725H1599V726H1611V727H1619V728H1623V727H1626V726H1630V727H1639V726H1659V725H1665V724H1672V723H1690V722H1733V721H1751V730H1749V731H1748V730H1741V731H1732V732H1714V733H1713V732H1707V733H1693V734H1685V735H1678V736H1666V737H1654V738H1652V737H1647V738H1625V739H1615V738H1604V737H1597V738H1595V737H1579V736H1562V735H1542V734H1536V733H1535V734H1531V733H1529V732H1519V731H1515V732H1509V731H1504V730H1492V731H1486V732H1467V733H1461V734H1448V735H1421V736H1383V735H1378V736H1362V735H1321V734H1306V735H1293V734H1286V735H1227V736H1208V737H1205V736H1200V737H1198V738H1165V737H1159V736H1149V737H1147V736H1135V735H1133V734H1124V735H1122V734H1113V733H1109V732H1084V731H1065V730H1049V731H959V730H956V729H954V728H949V727H936V728H935V729H933V730H931V731H929V732H928V733H926V734H924V735H923V736H922V737H921V738H920V739H919V741H918V742H917V744H916V745H915V747H914V749H913V751H912V752H911V754H910V755H909V757H908V758H907V760H906V761H905V763H904V765H903V766H902V768H901V770H900V771H899V773H898V774H897V776H896V777H895V779H894V781H893V783H892V784H891V786H890V788H889V789H888V791H887V792H886V793H885V794H884V795H883V796H882V797H881V798H879V799H878V800H876V801H866V800H864V799H863V798H823V799H819V798H748V799H734V798H704V799H697V798H688V799H683V798H581V797H574V798H568V797H554V798H527V797H511V798H505V797H475V798H462V797H446V798H433V797H425V798H410V797H399V798H379V797H358V798H338V797H324V798H309V797H283V798H268V797H254V798H242V797H233V798H166V797H161V798H131V797H119V798H103V797H97V798H63V797H40V798H3Z" fill="#ff3dff"/>
<path d="M19.5,786V783.5H38V784.5H49V783.5H57.5V786M64.5,786V783.5H100V784.5H138V783.5H146.5V786M159.5,786V783.5H172.5V786M182.5,786V783.5H212V784.5H223V783.5H226.5V786M263.5,786V783.5H276V784.5H278V783.5H281.5V786M286.5,786V783.5H372.5V786M417.5,786V783.5H469.5V786M518.5,786V783.5H583.5V786M622.5,786V783.5H646.5V786M655.5,786V783.5H671V784.5H682V783.5H710V784.5H717.5V787M745.5,787V784.5H756V783.5H762V784.5H804V783.5H816V784.5H819.5V787M1092.5,718V715.5H1093V716.5H1104V717.5H1117V718.5H1124V717.5H1129V718.5H1135V719.5H1148V720.5H1157V721.5H1166V722.5H1166.5V725M1214.5,724V721.5H1215V720.5H1245V719.5H1253V720.5H1256.5V723M1355.5,723V720.5H1396V719.5H1440.5V722M1545.5,720V717.5H1553V718.5H1562V719.5H1571V720.5H1580V721.5H1590V722.5H1599V723.5H1611V724.5H1625.5V727M1676.5,724V721.5H1678V720.5H1690V719.5H1721V718.5H1722V719.5H1726V718.5H1729.5V721M15.5,798V800.5H51V799.5H68V800.5H104.5V798M128.5,798V800.5H213.5V798M227.5,798V800.5H233V799.5H263V800.5H285.5V798M326.5,798V800.5H336V799.5H338V800.5H341.5V798M382.5,798V800.5H424.5V798M460.5,798V800.5H486V799.5H507V800.5H532.5V798M580.5,798V800.5H584V799.5H597V800.5H602.5V798M650.5,798V800.5H665.5V798M708.5,798V800.5H747.5V798M766.5,798V800.5H772V801.5H793V800.5H823V801.5H826.5V799M1111.5,733V735.5H1115V736.5H1122V737.5H1140V738.5H1140.5V736M1302.5,734V736.5H1323V737.5H1335V738.5H1371.5V736M1431.5,735V737.5H1445V736.5H1461V735.5H1473V734.5H1473.5V732M1515.5,732V734.5H1519V735.5H1530V736.5H1535V735.5H1536V736.5H1540.5V734M1687.5,734V736.5H1692V735.5H1704V736.5H1706V735.5H1716V734.5H1723V733.5H1725V734.5H1728.5V732M171,798.5H172V799.5H174V800.5H179V801.5H187V802.5H206V801.5H212V800.5H217V799.5H221V798.5H222M611,785.5H613V784.5H618V783.5H624V782.5H638V781.5H670V780.5H687V781.5H701V782.5H715V783.5H724V784.5H729V785.5H731V786.5H732M946,727.5H947V728.5H950V729.5H953V730.5H955V731.5H958V732.5H962V733.5H982V734.5H991V733.5H1009V734.5H1019V733.5H1098V732.5H1102M621,798.5H622V799.5H625V800.5H633V801.5H634V800.5H638V801.5H672V800.5H675V799.5H678V798.5H679M43,785.5H44V784.5H51V783.5H77V782.5H86V783.5H91V782.5H118V783.5H139V784.5H151V785.5H154V786.5H155M1200,737.5H1203V738.5H1234V737.5H1236V738.5H1292V737.5H1334V736.5H1342V735.5H1345M369,786.5H370V785.5H378V784.5H391V783.5H435V782.5H466V783.5H482V782.5H485V783.5H501V784.5H515V785.5H517V786.5H518M1088,717.5H1089V716.5H1092V715.5H1102V714.5H1105V715.5H1115V716.5H1120V717.5H1124V718.5H1127V719.5H1128M35,798.5H37V799.5H44V800.5H55V801.5H72V802.5H159V801.5H175V800.5H185V799.5H190V798.5H191M742,786.5H743V785.5H746V784.5H757V783.5H772V784.5H786V783.5H790V784.5H796V785.5H801V786.5H802M698,799.5H700V800.5H704V801.5H712V802.5H715V801.5H717V802.5H749V801.5H759V800.5H765V799.5H766V798.5H767M1054,717.5H1055V716.5H1058V715.5H1070V714.5H1096V715.5H1107V716.5H1114V717.5H1118V718.5H1123V719.5H1126V720.5H1128M155,798.5H157V799.5H168V800.5H199V801.5H215V800.5H222V801.5H233V800.5H244V801.5H245V800.5H277V799.5H283V798.5H286M1395,722.5H1396V721.5H1402V720.5H1408V719.5H1430V718.5H1434V719.5H1438V718.5H1452V717.5H1465V716.5H1478V715.5H1517V716.5H1528V717.5H1537V718.5H1541V719.5H1544M539,798.5H540V799.5H544V800.5H552V801.5H553V800.5H557V801.5H573V802.5H582V803.5H609V802.5H629V801.5H645V800.5H654V799.5H658V798.5H660M414,785.5H415V784.5H418V783.5H425V782.5H427V783.5H429V782.5H443V781.5H453V782.5H470V781.5H477V782.5H491V783.5H499V784.5H503V785.5H504M442,798.5H446V799.5H459V800.5H495V801.5H519V800.5H539V799.5H545V798.5H547M994,717.5H997V716.5H1006V715.5H1028V714.5H1049V715.5H1064V716.5H1069V717.5H1071M530,785.5H531V784.5H538V783.5H555V782.5H596V783.5H624V784.5H629V785.5H631M42,798.5H49V799.5H75V800.5H80V799.5H84V800.5H94V801.5H106V800.5H129V801.5H136V800.5H190V799.5H206V798.5H209M1182,725.5H1183V724.5H1187V723.5H1194V722.5H1199V721.5H1208V720.5H1216V719.5H1259V718.5H1302V719.5H1324V720.5H1333V721.5H1343V722.5H1344M1524,732.5H1525V733.5H1527V734.5H1533V735.5H1539V736.5H1546V737.5H1555V738.5H1562V739.5H1584V740.5H1593V741.5H1611V742.5H1627V741.5H1646V740.5H1653V739.5H1661V738.5H1663V739.5H1664V738.5H1671V737.5H1674V736.5H1678V735.5H1681V734.5H1682M822,786.5H826V785.5H836V784.5H852V785.5H861V786.5H868M812,799.5H813V800.5H816V801.5H820V802.5H827V803.5H839V804.5H850V803.5H862V802.5H863V803.5H867V804.5H870V803.5H873V802.5H874M830,799.5H833V800.5H840V801.5H856V800.5H859V801.5H862V800.5H863V801.5H866V802.5H870V801.5H871M760,785.5H763V784.5H781V783.5H796V782.5H811V783.5H831V784.5H844V785.5H849V786.5H850M1040,717.5H1041V716.5H1046V715.5H1052V714.5H1063V713.5H1072V714.5H1100V715.5H1108V716.5H1117V717.5H1122V718.5H1126V719.5H1127V720.5H1130M1330,722.5H1331V721.5H1332V720.5H1336V719.5H1342V718.5H1350V717.5H1351V718.5H1353V717.5H1361V716.5H1367V715.5H1438V716.5H1440V715.5H1443V716.5H1456V717.5H1462V718.5H1468V719.5H1470M1340,735.5H1342V736.5H1348V737.5H1355V738.5H1358V739.5H1366V740.5H1379V741.5H1397V742.5H1405V741.5H1419V740.5H1434V739.5H1446V738.5H1454V737.5H1460V736.5H1466V735.5H1471V734.5H1472V735.5H1473V734.5H1477V733.5H1479V732.5H1480M1440,721.5H1441V720.5H1444V719.5H1448V718.5H1455V717.5H1461V716.5H1470V715.5H1477V714.5H1480V713.5H1492V712.5H1523V713.5H1534V714.5H1540V715.5H1548V716.5H1554V717.5H1558V718.5H1564V719.5H1567V720.5H1569V721.5H1570M1090,732.5H1093V733.5H1098V734.5H1105V735.5H1112V736.5H1120V737.5H1129V738.5H1136V739.5H1143V738.5H1146V739.5H1156V740.5H1180V739.5H1186V738.5H1190M1380,722.5H1381V721.5H1384V720.5H1390V719.5H1400V718.5H1414V717.5H1436V718.5H1450V719.5H1453V718.5H1454V719.5H1459V720.5H1460M950,728.5H951V729.5H952V730.5H954V731.5H957V732.5H959V733.5H962V734.5H965V735.5H975V734.5H1000V733.5H1006V732.5H1009V731.5H1010" fill="none" stroke="#ff3dff" stroke-width="1"/>
<path d="M7,788.5h7M27,787.5h9M38,787.5h6M52,787.5h3M63,787.5h4M91,788.5h5M99,788.5h9M110,787.5h5M125,788.5h7M138,787.5h5M148,787.5h8M170,787.5h7M191,788.5h9M254,788.5h7M273,787.5h3M325,788.5h9M352,788.5h6M372,787.5h2M380,787.5h6M390,787.5h3M416,788.5h2M422,787.5h6M432,788.5h5M447,787.5h2M456,787.5h3M469,787.5h4M477,788.5h4M487,787.5h3M504,787.5h7M521,787.5h9M536,787.5h4M548,787.5h6M564,788.5h4M570,788.5h6M588,787.5h2M594,788.5h8M619,788.5h2M630,787.5h6M641,787.5h8M660,787.5h7M677,787.5h4M687,787.5h5M701,788.5h7M711,788.5h5M724,788.5h8M736,788.5h9M756,789.5h5M765,788.5h7M786,788.5h4M797,789.5h2M810,789.5h3M841,788.5h5M1023,720.5h9M1037,719.5h6M1045,720.5h2M1130,723.5h8M1175,728.5h5M1183,727.5h6M1211,726.5h8M1249,724.5h3M1265,724.5h6M1274,723.5h7M1305,723.5h9M1442,723.5h8M1552,721.5h4M1581,725.5h2M1596,726.5h4M1669,725.5h3M1691,723.5h4M1726,723.5h2M1735,722.5h5M3,796.5h9M21,796.5h2M37,796.5h6M51,796.5h3M74,795.5h6M93,796.5h6M103,796.5h4M113,796.5h7M124,796.5h4M142,795.5h4M155,795.5h7M169,796.5h7M179,795.5h5M220,795.5h3M232,796.5h2M242,795.5h3M267,796.5h7M276,795.5h9M297,796.5h7M308,796.5h8M349,795.5h7M370,795.5h4M399,796.5h8M420,796.5h3M472,796.5h9M501,796.5h2M507,796.5h9M526,795.5h7M536,796.5h7M549,795.5h7M584,795.5h3M594,795.5h3M606,796.5h8M622,796.5h9M650,796.5h6M660,796.5h5M678,796.5h2M687,795.5h2M697,796.5h4M706,796.5h3M716,796.5h5M742,796.5h5M749,796.5h9M764,796.5h8M782,795.5h3M798,795.5h6M824,796.5h3M838,797.5h8M857,797.5h5M1001,729.5h4M1061,727.5h3M1094,730.5h8M1284,733.5h8M1300,731.5h8M1355,733.5h3M1383,734.5h7M1397,734.5h4M1412,733.5h2M1428,733.5h8M1440,732.5h3M1463,731.5h4M1471,731.5h7M1509,729.5h4M1548,733.5h3M1558,732.5h9M1606,736.5h2M1616,737.5h5M1623,737.5h4M1629,735.5h9M1672,733.5h9M1688,731.5h9M1712,731.5h9M1733,728.5h8" fill="none" stroke="#000" stroke-width="1"/>
<path d="M3,331.5H1718" stroke="#b0b0b0" stroke-width="1" stroke-dasharray="5 5" fill="none"/>
<path d="M3,792.5H1718" stroke="#b0b0b0" stroke-width="1" stroke-dasharray="5 5" fill="none"/>
<path d="M826.5,58V501" stroke="#8e8e8e" stroke-width="1" fill="none"/>
<path d="M825.5,59V501" stroke="#c8c8c8" stroke-width="1" stroke-dasharray="5 5" fill="none"/>
<path d="M903.5,58V501" stroke="#9a9a9a" stroke-width="1" fill="none"/>
<path d="M826.5,503V942" stroke="#ffffff" stroke-width="1" fill="none"/>
<path d="M825.5,500V942" stroke="#ececec" stroke-width="1" stroke-dasharray="5 5" fill="none"/>
<path d="M903.5,503V942" stroke="#ffffff" stroke-width="1" fill="none"/>
<rect x="3" y="501" width="1748" height="2" fill="#787878"/>
</svg>
<span class="vl vy" style="top:59px">12 V</span>
<span class="vl vy" style="top:103px">10 V</span>
<span class="vl vy" style="top:147px">8 V</span>
<span class="vl vy" style="top:192px">6 V</span>
<span class="vl vy" style="top:236px">4 V</span>
<span class="vl vy" style="top:280px">2 V</span>
<span class="vl vy" style="top:325px">0 V</span>
<span class="vl vy" style="top:369px">-2 V</span>
<span class="vl vy" style="top:413px">-4 V</span>
<span class="vl vy" style="top:458px">-6 V</span>
<span class="vl vm" style="top:522px">12 V</span>
<span class="vl vm" style="top:566px">10 V</span>
<span class="vl vm" style="top:610px">8 V</span>
<span class="vl vm" style="top:654px">6 V</span>
<span class="vl vm" style="top:698px">4 V</span>
<span class="vl vm" style="top:742px">2 V</span>
<span class="vl vm" style="top:786px">0 V</span>
<span class="vl vm" style="top:830px">-2 V</span>
<span class="vl vm" style="top:874px">-4 V</span>
<span class="vl vm" style="top:918px">-6 V</span>
<span class="tl" style="left:85.2px">-40 ns</span>
<span class="tl" style="left:260.05px">-30 ns</span>
<span class="tl" style="left:434.9px">-20 ns</span>
<span class="tl" style="left:609.75px">-10 ns</span>
<span class="tl" style="left:784.6px">0 s</span>
<span class="tl" style="left:959.45px">10 ns</span>
<span class="tl" style="left:1134.3px">20 ns</span>
<span class="tl" style="left:1309.15px">30 ns</span>
<span class="tl" style="left:1484px">40 ns</span>
<span class="tl" style="left:1658.85px">50 ns</span>
<svg class="abs" style="left:0;top:0;pointer-events:none" width="1920" height="1029" viewBox="0 0 1920 1029">
<!-- nav bracket -->
<path d="M593,36.500H586.700V52.500H593M1160.500,36.500H1166.800V52.500H1160.500" stroke="#e0e0e0" stroke-width="1" fill="none"/>
<rect x="588" y="44" width="578" height="2" fill="#b8b8b8"/>
<!-- nav trigger marker -->
<polygon points="852,33 867,33 859.5,38.5" fill="#f5932a"/>
<path d="M853.900,40.600H865.600V52.500H862L859.700,56L857.400,52.500H853.900Z" fill="#000" stroke="#f5932a" stroke-width="1.300"/>
<text x="859.700" y="50" font-size="9.500" font-weight="bold" fill="#e8e8e8" text-anchor="middle" font-family="Liberation Sans, sans-serif">T</text>
<!-- plot trigger marker -->
<polygon points="814.800,58 835.200,58 825,67.800" fill="#f5932a"/>
<path d="M816,69H834V88H828.800L824.700,94.500L820.600,88H816Z" fill="#000" stroke="#f5932a" stroke-width="2"/>
<text x="824.300" y="83.300" font-size="15" fill="#f5932a" stroke="#f5932a" stroke-width="0.300" text-anchor="middle" font-family="Liberation Sans, sans-serif">T</text>
<rect x="826" y="58" width="1" height="38" fill="#9a9a9a"/>
<!-- zoom corner icon -->
<polygon points="1710,65 1745,65 1745,99.500" fill="#515151"/>
<circle cx="1737.300" cy="71.600" r="4" fill="#5c5c5c" stroke="#a0a0a0" stroke-width="1.300"/>
<path d="M1734.300,74.800L1727.800,80.800" stroke="#a0a0a0" stroke-width="2.400" stroke-linecap="round"/>
<!-- trigger level arrow -->
<polygon points="1730,293 1742,283 1742,291.500 1751,291.500 1751,294.500 1742,294.500 1742,303" fill="#ffef3a"/>
<!-- C1 marker -->
<path d="M8.500,317H82.800L89.200,330.500L82.800,344H8.500Q5.900,344 5.900,341.400V319.600Q5.900,317 8.500,317Z" fill="#fff23c"/>
<path d="M34,320H81.700L87,330.500L81.700,341.500H34Z" fill="#1c1a08"/>
<!-- C3 marker -->
<path d="M9.500,779H77.600L83,791.500L77.600,803.800H9.500Q7.200,803.800 7.200,801.500V781.300Q7.200,779 9.500,779Z" fill="#1c0c1c" stroke="#ff4dff" stroke-width="2"/>
<path d="M33,779V803.800" stroke="#ff4dff" stroke-width="2"/>
<!-- cursor labels -->
<rect x="796.500" y="503.500" width="29" height="23.500" rx="3" fill="#de57de"/>
<rect x="827" y="503.500" width="21.500" height="23.500" rx="4" fill="#3b3b3b"/>
<rect x="828" y="503.500" width="17.500" height="23.500" rx="8.500" fill="#2a8bd6"/>
<rect x="881.500" y="503.500" width="21.500" height="23.500" rx="4" fill="#3b3b3b"/>
<rect x="884" y="503.500" width="17.500" height="23.500" rx="8.500" fill="#2a8bd6"/>
<rect x="905" y="503.500" width="29.500" height="23.500" rx="3" fill="#de57de"/>
<!-- readouts -->
<rect x="775" y="536.500" width="179.500" height="51.500" rx="4" fill="#383838" fill-opacity="0.940"/>
<rect x="686" y="592.500" width="139.500" height="28.500" rx="4" fill="#383838" fill-opacity="0.940"/>
<rect x="905" y="592.500" width="139.500" height="28.500" rx="4" fill="#383838" fill-opacity="0.940"/>
<path d="M827,606.500H904" stroke="#ff0000" stroke-width="1" stroke-dasharray="13 5" shape-rendering="crispEdges"/>
<!-- splitter handle -->
<circle cx="1761.500" cy="479" r="2.200" fill="#e0e0e0"/>
<circle cx="1761.500" cy="486.800" r="2.200" fill="#e0e0e0"/>
<circle cx="1761.500" cy="494.600" r="2.200" fill="#e0e0e0"/>
</svg>
<span class="t" style="left:9px;top:322px;font-size:15px;color:#1a1400;word-spacing:-2.500px">C 1</span>
<span class="t" style="left:36px;top:322px;font-size:15px;color:#fff23c">-10 mV</span>
<span class="t" style="left:8.700px;top:784px;font-size:15px;color:#ff55ff;word-spacing:-1px">C 3</span>
<span class="t" style="left:36px;top:784px;font-size:15px;color:#ff55ff;letter-spacing:-0.300px">10 mV</span>
<span class="t" style="left:801px;top:507px;font-size:17px;color:#2c0a3c">C3</span>
<span class="t" style="left:909px;top:507px;font-size:17px;color:#2c0a3c">C3</span>
<span class="t" style="left:831px;top:507px;font-size:17px;color:#fff">A</span>
<span class="t" style="left:887px;top:507px;font-size:17px;color:#fff">B</span>
<span class="t" style="left:778px;top:544px;font-size:18px;color:#dcdcdc">Δt: 4.451 ns</span>
<span class="t" style="left:779px;top:565px;font-size:18px;color:#dcdcdc">1/Δt: 224.68 MHz</span>
<span class="t" style="left:690px;top:598px;font-size:18px;color:#dcdcdc">t: 59.497 ps</span>
<span class="t" style="left:909px;top:598px;font-size:18px;color:#dcdcdc">t: 4.510 ns</span>
<div id="rpanel"></div>
<span class="t" style="left:1769px;width:151px;text-align:center;top:33px;font-size:15px;font-weight:bold;color:#f4f4f4;letter-spacing:0.700px">Add New...</span>
<div class="btn sel" style="left:1778px;top:56px">Cursors</div>
<div class="btn" style="left:1850px;top:56px">Callout</div>
<div class="btn" style="left:1778px;top:102px">Measure</div>
<div class="btn" style="left:1850px;top:102px">Search</div>
<div class="btn two" style="left:1778px;top:148px">Results <br>Table</div>
<div class="btn" style="left:1850px;top:148px">Plot</div>
<div class="sep" style="top:191px"></div>
<div class="btn" style="left:1778px;top:198px"><svg width="61" height="35" viewBox="0 0 61 35" style="position:absolute;left:0;top:0">
<rect x="19.500" y="6.500" width="22" height="19" fill="none" stroke="#c4c4c4" stroke-width="1.800" stroke-dasharray="3.200 2.400"/>
<circle cx="32" cy="14" r="4.600" fill="none" stroke="#c4c4c4" stroke-width="1.500"/>
<path d="M28.600,17.500L24.500,20.800" stroke="#c4c4c4" stroke-width="2.200" stroke-linecap="round"/>
<path d="M36.200,20.200L44,24.200L40.800,25.400L43,29.200L41.500,30L39.300,26.200L37,28.500Z" fill="#b8b8b8"/>
</svg></div>
<div class="btn" style="left:1850px;top:198px">More...</div>
<div class="sep" style="top:244px"></div>
<div class="meas" style="top:260px;height:59px"><div class="h"></div><span class="t" style="top:2px;color:#fff">Meas 1</span><span class="pill">3</span>
<span class="t" style="top:22px">Peak-to-Peak</span><span class="t" style="top:41px">µ': 3.333 V</span></div>
<div class="meas" style="top:327px;height:78px"><div class="h"></div><span class="t" style="top:2px;color:#fff">Meas 2</span><span class="pill">3</span>
<span class="t" style="top:22px">Rise Time</span><span class="t" style="top:41px">µ': 1.957 ns</span><span class="t" style="top:61px;letter-spacing:0.450px"><b>Low amplitude</b></span></div>
<div class="meas" style="top:413px;height:78px"><div class="h"></div><span class="t" style="top:2px;color:#fff">Meas 3</span><span class="pill">3</span>
<span class="t" style="top:22px">Fall Time</span><span class="t" style="top:41px">µ': --</span><span class="t" style="top:61px;letter-spacing:0.450px"><b>Low amplitude</b></span></div>
<div class="meas" style="top:499px;height:78px"><div class="h sel"></div><span class="t" style="top:2px;color:#ff55ff">Meas 4</span><span class="pill">3</span>
<span class="t" style="top:22px">Frequency</span><span class="t" style="top:41px">µ': --</span><span class="t" style="top:61px;letter-spacing:0.450px"><b>Too few edges</b></span></div>
<div class="meas" style="top:585px;height:78px"><div class="h"></div><span class="t" style="top:2px;color:#fff">Meas 5</span><span class="pill">3</span>
<span class="t" style="top:22px">Period</span><span class="t" style="top:41px">µ': --</span><span class="t" style="top:61px;letter-spacing:0.450px"><b>Too few edges</b></span></div>
<div class="badge" style="left:3px;width:90px"><div class="h" style="background:#fff33c"></div>
<span class="t" style="left:5.500px;top:2px;color:#000">Ch 1</span>
<span class="t" style="left:5.500px;top:22px">2 V/div</span>
<span class="t" style="left:5.500px;top:60px">250 MHz</span>
<span class="t" style="left:71px;top:58px;font-size:8px;font-weight:bold">B<span style="font-size:7.500px;position:relative;top:4px;left:0.500px">w</span></span>
<svg class="abs" style="left:6px;top:39px" width="18" height="14" viewBox="0 0 18 14"><path d="M2,11.500V8Q2,2 7,2Q12,2 12,8" fill="none" stroke="#222" stroke-width="1.200"/><circle cx="7" cy="5.300" r="2.300" fill="none" stroke="#222" stroke-width="1.200"/><rect x="0.800" y="7.500" width="2.400" height="5" rx="1.200" fill="#e8e8e8" stroke="#222" stroke-width="0.900"/><rect x="11" y="7.500" width="3.400" height="5" rx="0.800" fill="#f4f4f4" stroke="#222" stroke-width="0.900"/></svg>
</div>
<div class="badge" style="left:98px;width:90px"><div class="h" style="background:#4a2a4b"></div>
<span class="t" style="left:5.500px;top:2px;color:#ff60ff">Ch 3</span>
<span class="t" style="left:5.500px;top:22px">2 V/div</span>
<span class="t" style="left:5.500px;top:60px">350 MHz</span>
<span class="t" style="left:71px;top:58px;font-size:8px;font-weight:bold">B<span style="font-size:7.500px;position:relative;top:4px;left:0.500px">w</span></span>
<svg class="abs" style="left:6px;top:39px" width="18" height="14" viewBox="0 0 18 14"><path d="M2,11.500V8Q2,2 7,2Q12,2 12,8" fill="none" stroke="#222" stroke-width="1.200"/><circle cx="7" cy="5.300" r="2.300" fill="none" stroke="#222" stroke-width="1.200"/><rect x="0.800" y="7.500" width="2.400" height="5" rx="1.200" fill="#e8e8e8" stroke="#222" stroke-width="0.900"/><rect x="11" y="7.500" width="3.400" height="5" rx="0.800" fill="#f4f4f4" stroke="#222" stroke-width="0.900"/></svg>
</div>
<div class="bbtn" style="left:962px"><i style="background:#1fd6e2"></i><span class="t" style="top:33px;font-size:20px">2</span></div>
<div class="bbtn" style="left:1007px"><i style="background:#8fd62a"></i><span class="t" style="top:33px;font-size:20px">4</span></div>
<div class="vsep" style="left:1057px"></div>
<div class="bbtn" style="left:1068px"><i style="background:#ff8f1f"></i><span class="t" style="top:17px;line-height:17px">Add <br>New <br>Math</span></div>
<div class="bbtn" style="left:1113px"><i style="background:#c4c4dc"></i><span class="t" style="top:17px;line-height:17px">Add <br>New <br>Ref</span></div>
<div class="bbtn" style="left:1158px"><i style="background:#c95cff"></i><span class="t" style="top:17px;line-height:17px">Add <br>New <br>Bus</span></div>
<div class="vsep" style="left:1208px"></div>
<div class="bbtn" style="left:1219px"><i style="background:#505050"></i><span class="t" style="top:35px;font-size:14px">AFG</span></div>
<div class="vsep" style="left:1269px"></div>
<div class="sbadge" style="left:1280px;width:200px"><div class="h"></div>
<span class="t" style="left:4.500px;top:2px;color:#fff;font-size:15px;letter-spacing:0.550px">Horizontal</span>
<span class="t" style="left:4px;top:21px">10 ns/div</span><span class="t" style="left:111px;top:21px;letter-spacing:-0.250px">100 ns</span>
<span class="t" style="left:4px;top:40px;letter-spacing:-0.450px">SR: 50 GS/s</span><span class="t" style="left:111px;top:40px">20 ps/pt</span>
<span class="t" style="left:4px;top:59px;letter-spacing:-0.050px">RL: 5 kpts</span><span class="t" style="left:124px;top:59px;letter-spacing:0.500px">47%</span>
<svg class="abs" style="left:109px;top:57.500px" width="12" height="16" viewBox="0 0 12 16"><path d="M1.650,1.650H9.350V9.800H7.600L5.500,13L3.400,9.800H1.650Z" fill="#000" stroke="#f5932a" stroke-width="1.300"/><text x="5.500" y="8.600" font-size="7.500" font-weight="bold" fill="#fff" text-anchor="middle" font-family="Liberation Sans, sans-serif">T</text></svg>
</div>
<div class="sbadge" style="left:1485px;width:160px"><div class="h"></div>
<span class="t" style="left:4.500px;top:2px;color:#fff;font-size:15px;letter-spacing:0.550px">Trigger</span>
<span class="abs" style="left:4px;top:21px;width:30px;height:15px;border-radius:6px;background:#fff33c;border:1px solid #111;color:#111;font-size:14px;line-height:12px;text-align:center">1</span>
<svg class="abs" style="left:44px;top:22px" width="18" height="14" viewBox="0 0 18 14"><path d="M1,11.500H5.500L11.500,2.500H17" fill="none" stroke="#3a3a8a" stroke-width="1.100"/></svg>
<span class="t" style="left:71px;top:21px">1.68 V</span>
</div>
<div class="sbadge" style="left:1650px;width:150px"><div class="h"></div>
<span class="t" style="left:4.500px;top:2px;color:#fff;font-size:15px;letter-spacing:0.550px">Acquisition</span>
<span class="t" style="left:4px;top:21px">Auto,</span><span class="t" style="left:85px;top:21px">Analyze</span>
<span class="t" style="left:4px;top:40px">Sample: 8 bits</span>
<span class="t" style="left:4px;top:59px">326 Acqs</span>
</div>
<div class="vsep" style="left:1811px"></div>
<div class="abs" style="left:1822px;top:948px;width:90px;height:36px;border-radius:7px;background:#f3f310;border:1px solid #77772a;color:#000;font-weight:bold;font-size:13.500px;line-height:36px;text-align:center">Ready</div>
<div class="abs" style="left:1822px;top:989px;width:90px;height:37px;border-radius:6px;background:#c9c9c9;color:#111;font-size:14px;line-height:17px;text-align:center;padding-top:1px;white-space:nowrap">18 Dec 2024 <br><span style="letter-spacing:0.400px">8:20:27 AM</span></div>
</body>
</html>
